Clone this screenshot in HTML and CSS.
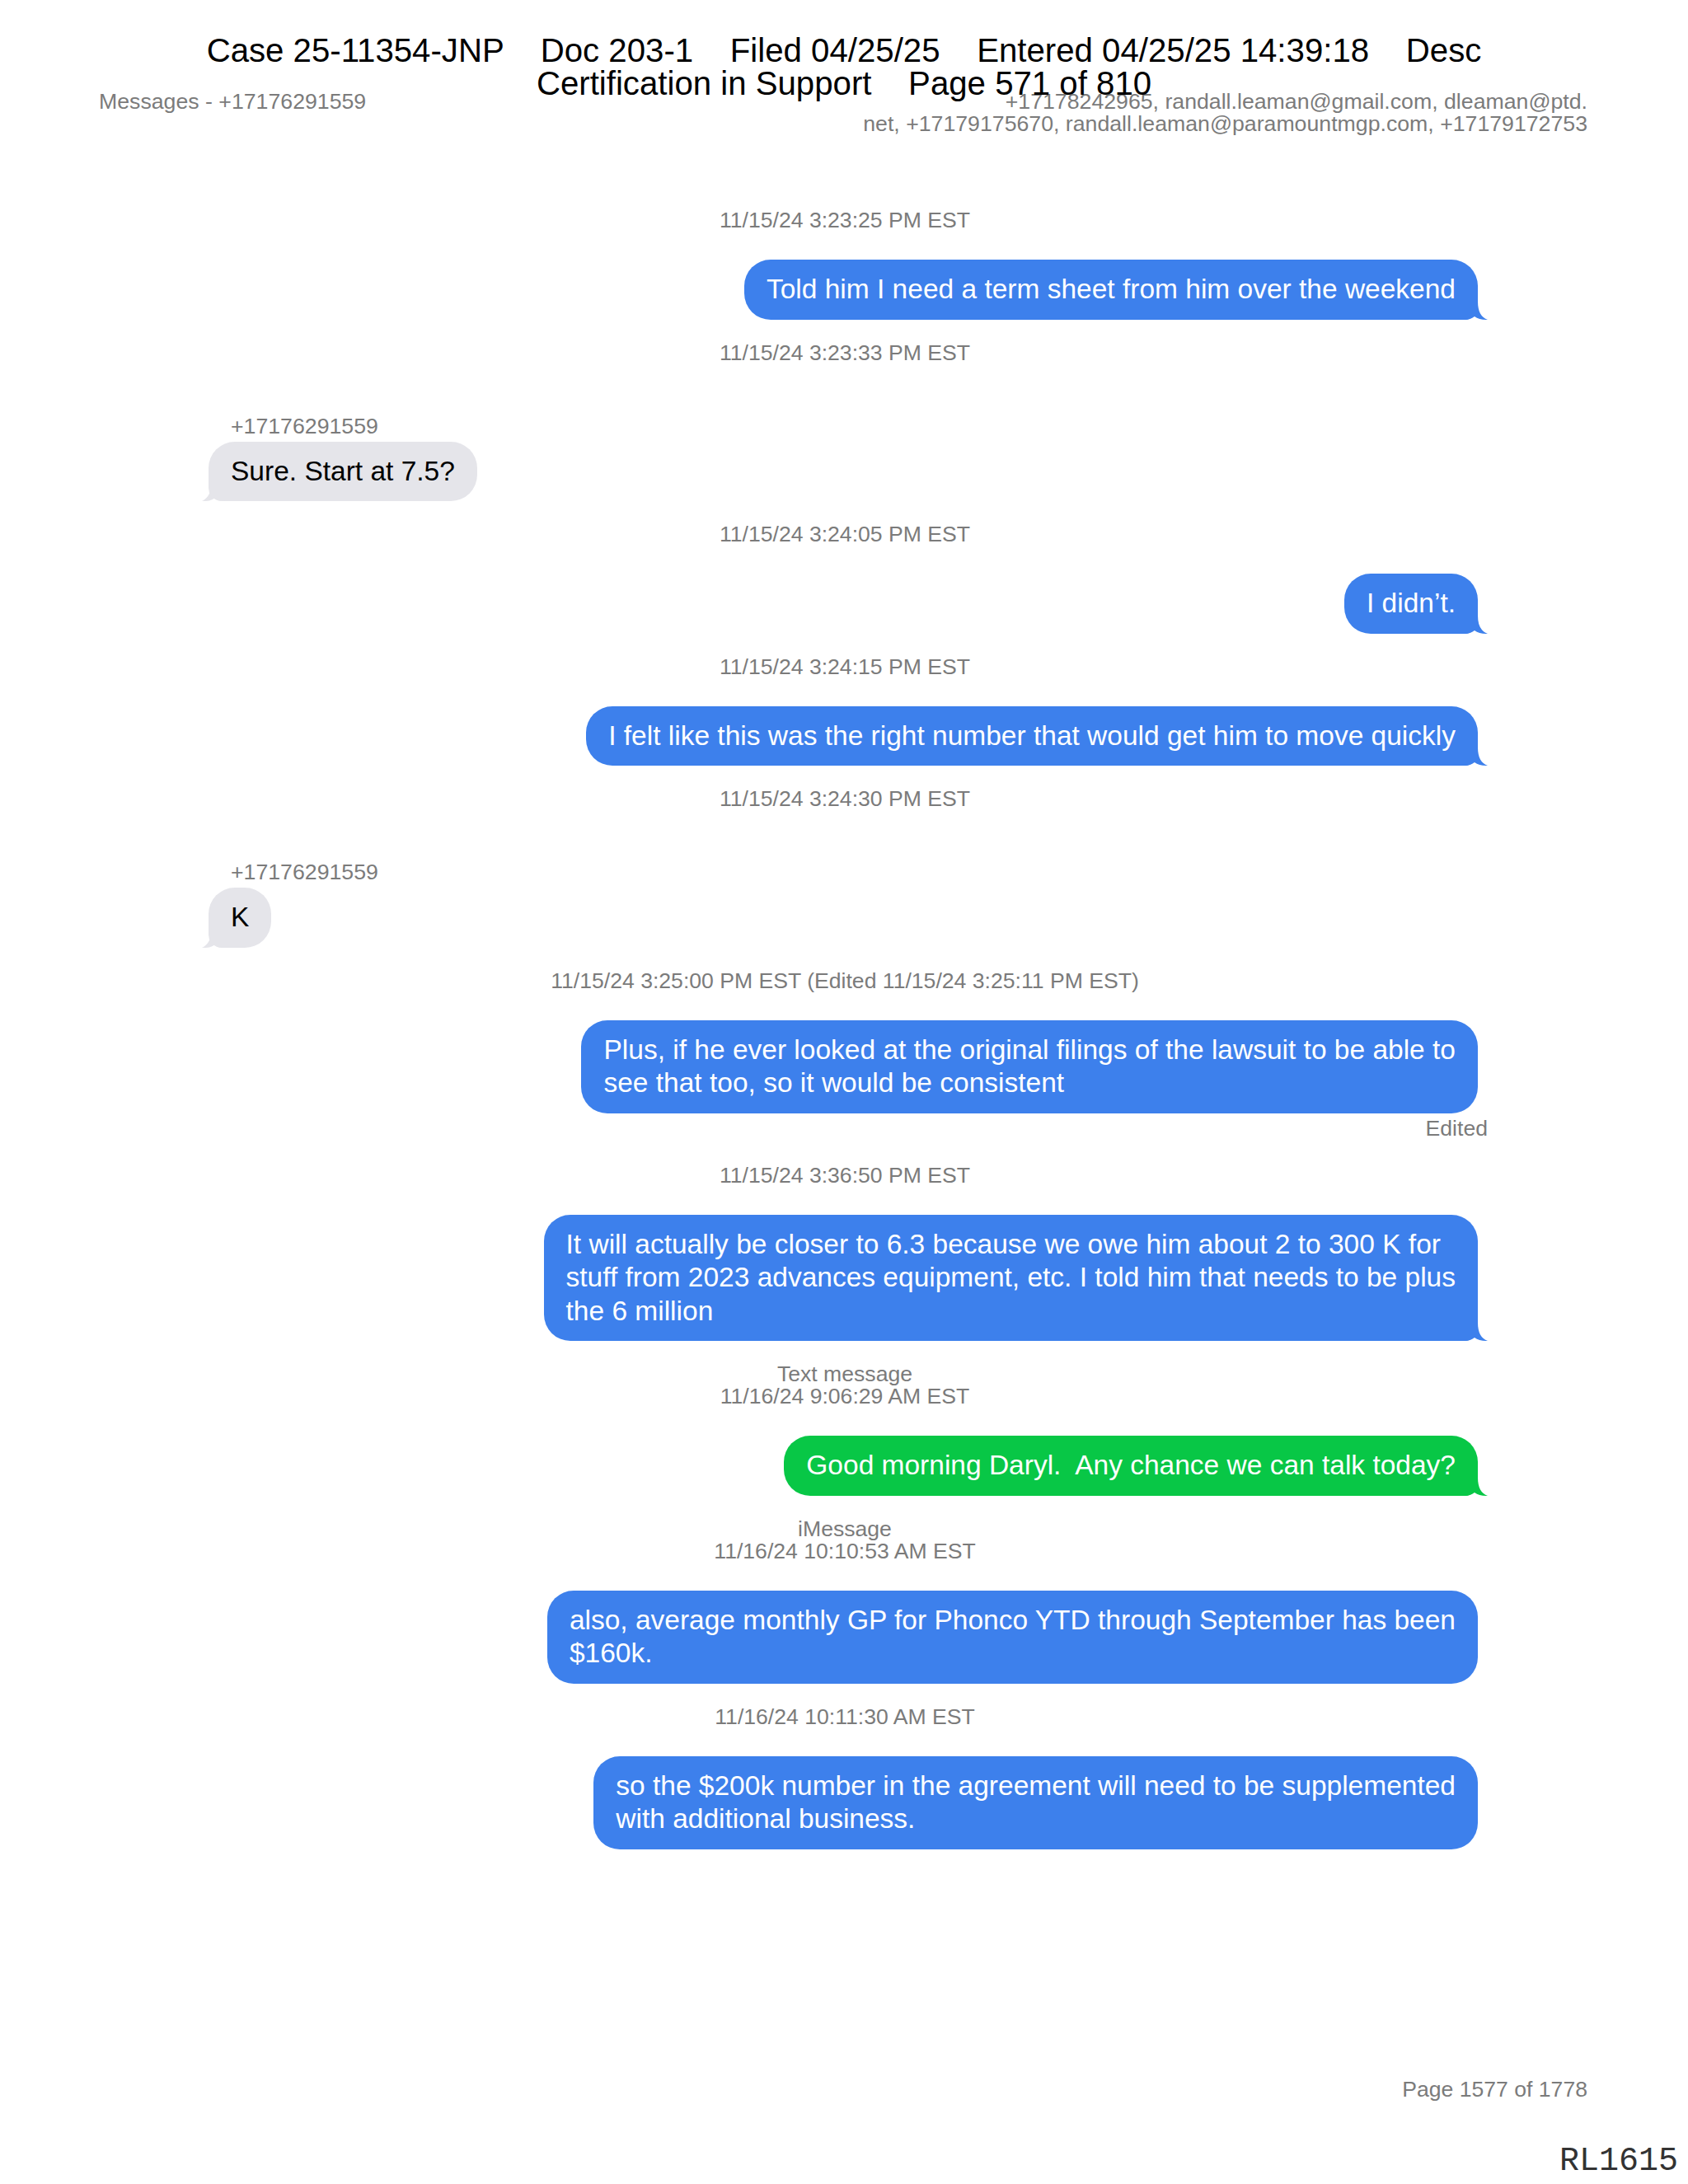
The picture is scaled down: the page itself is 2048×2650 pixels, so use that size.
FILE: index.html
```html
<!DOCTYPE html>
<html lang="en">
<head>
<meta charset="utf-8">
<title>Messages - +17176291559</title>
<link rel="stylesheet" href="styles.css">
</head>
<body>
<div class="stamp">Case 25-11354-JNP    Doc 203-1    Filed 04/25/25    Entered 04/25/25 14:39:18    Desc
Certification in Support    Page 571 of 810</div>
<div class="page">
  <header class="topbar">
    <div class="title">Messages - +17176291559</div>
    <div class="parts">+17178242965, randall.leaman@gmail.com, dleaman@ptd.<br>net, +17179175670, randall.leaman@paramountmgp.com, +17179172753</div>
  </header>

  <main class="thread">
    <section class="msg sent">
      <div class="meta">11/15/24 3:23:25 PM EST</div>
      <div class="row"><div class="bubble blue">Told him I need a term sheet from him over the weekend<svg class="tail" viewBox="0 0 30 36"><path d="M0 0H16V14C16 26 20 33 28 36C22 36.5 16 35 12 32C8 35 4 36 0 36Z"/></svg></div></div>
    </section>

    <section class="msg recv">
      <div class="meta">11/15/24 3:23:33 PM EST</div>
      <div class="sender">+17176291559</div>
      <div class="row"><div class="bubble gray">Sure. Start at 7.5?<svg class="tail" viewBox="0 0 30 36"><path d="M0 0H16V10C16 24 20 32 28 36C22 36.5 16 35 12 32C8 35 4 36 0 36Z"/></svg></div></div>
    </section>

    <section class="msg sent">
      <div class="meta">11/15/24 3:24:05 PM EST</div>
      <div class="row"><div class="bubble blue">I didn’t.<svg class="tail" viewBox="0 0 30 36"><path d="M0 0H16V14C16 26 20 33 28 36C22 36.5 16 35 12 32C8 35 4 36 0 36Z"/></svg></div></div>
    </section>

    <section class="msg sent">
      <div class="meta">11/15/24 3:24:15 PM EST</div>
      <div class="row"><div class="bubble blue">I felt like this was the right number that would get him to move quickly<svg class="tail" viewBox="0 0 30 36"><path d="M0 0H16V14C16 26 20 33 28 36C22 36.5 16 35 12 32C8 35 4 36 0 36Z"/></svg></div></div>
    </section>

    <section class="msg recv">
      <div class="meta">11/15/24 3:24:30 PM EST</div>
      <div class="sender">+17176291559</div>
      <div class="row"><div class="bubble gray">K<svg class="tail" viewBox="0 0 30 36"><path d="M0 0H16V10C16 24 20 32 28 36C22 36.5 16 35 12 32C8 35 4 36 0 36Z"/></svg></div></div>
    </section>

    <section class="msg sent">
      <div class="meta">11/15/24 3:25:00 PM EST (Edited 11/15/24 3:25:11 PM EST)</div>
      <div class="row"><div class="bubble blue square">Plus, if he ever looked at the original filings of the lawsuit to be able to<br>see that too, so it would be consistent</div></div>
      <div class="edited">Edited</div>
    </section>

    <section class="msg sent">
      <div class="meta">11/15/24 3:36:50 PM EST</div>
      <div class="row"><div class="bubble blue">It will actually be closer to 6.3 because we owe him about 2 to 300 K for<br>stuff from 2023 advances equipment, etc. I told him that needs to be plus<br>the 6 million<svg class="tail" viewBox="0 0 30 36"><path d="M0 0H16V14C16 26 20 33 28 36C22 36.5 16 35 12 32C8 35 4 36 0 36Z"/></svg></div></div>
    </section>

    <section class="msg sent">
      <div class="meta">Text message<br>11/16/24 9:06:29 AM EST</div>
      <div class="row"><div class="bubble green">Good morning Daryl.&nbsp; Any chance we can talk today?<svg class="tail" viewBox="0 0 30 36"><path d="M0 0H16V14C16 26 20 33 28 36C22 36.5 16 35 12 32C8 35 4 36 0 36Z"/></svg></div></div>
    </section>

    <section class="msg sent">
      <div class="meta">iMessage<br>11/16/24 10:10:53 AM EST</div>
      <div class="row"><div class="bubble blue square">also, average monthly GP for Phonco YTD through September has been<br>$160k.</div></div>
    </section>

    <section class="msg sent">
      <div class="meta">11/16/24 10:11:30 AM EST</div>
      <div class="row"><div class="bubble blue square">so the $200k number in the agreement will need to be supplemented<br>with additional business.</div></div>
    </section>
  </main>

  <footer class="footer">
    <div class="pagenum">Page 1577 of 1778</div>
    <div class="bates">RL1615</div>
  </footer>
</div>
</body>
</html>
```

FILE: styles.css
```css
html, body {
  margin: 0;
  padding: 0;
  background: #ffffff;
}

body {
  font-family: "Liberation Sans", Arial, Helvetica, sans-serif;
  color: #000;
}

.stamp {
  position: absolute;
  top: 42px;
  left: 0;
  right: 0;
  text-align: center;
  font-size: 40.2px;
  line-height: 40px;
  white-space: pre;
  color: #000;
  z-index: 5;
}

.page {
  min-height: 2650px;
  box-sizing: border-box;
  display: flex;
  flex-direction: column;
  padding-bottom: 7px;
}

.topbar {
  display: flex;
  justify-content: space-between;
  align-items: flex-start;
  margin-top: 110px;
  padding: 0 122px 0 120px;
  font-size: 26.7px;
  line-height: 27px;
  color: #7b7b7b;
}

.parts {
  text-align: right;
}

.thread {
  display: flex;
  flex-direction: column;
  margin-top: 63px;
  padding: 0 243px 0 245px;
}

.msg {
  display: flex;
  flex-direction: column;
  margin-top: 27px;
}

.meta {
  text-align: center;
  font-size: 26.6px;
  line-height: 27px;
  color: #7b7b7b;
  margin-bottom: 34px;
}

.sender {
  margin: 28px 0 5px 35px;
  font-size: 26.7px;
  line-height: 27px;
  color: #7b7b7b;
}

.row {
  display: flex;
}

.sent .row {
  justify-content: flex-end;
  padding-right: 12px;
}

.recv .row {
  justify-content: flex-start;
  padding-left: 8px;
}

.bubble {
  position: relative;
  font-size: 33.5px;
  line-height: 40.5px;
  padding: 16px 27px;
  border-radius: 32px;
  white-space: nowrap;
}

.blue {
  background: #3d80ec;
  color: #fff;
  border-bottom-right-radius: 16px;
}

.green {
  background: #08c746;
  color: #fff;
  border-bottom-right-radius: 16px;
}

.gray {
  background: #e5e5ea;
  color: #000;
  border-bottom-left-radius: 16px;
}

.square {
  border-bottom-right-radius: 32px;
}

.tail {
  position: absolute;
  bottom: 0;
  right: -14px;
  width: 30px;
  height: 36px;
  overflow: visible;
}

.blue .tail { fill: #3d80ec; }
.green .tail { fill: #08c746; }
.gray .tail {
  fill: #e5e5ea;
  right: auto;
  left: -10px;
  transform: scaleX(-1);
}

.edited {
  text-align: right;
  font-size: 26.6px;
  line-height: 27px;
  color: #7b7b7b;
  margin: 5px 0 3px;
}

.footer {
  margin-top: auto;
  display: flex;
  flex-direction: column;
}

.pagenum {
  text-align: right;
  padding-right: 122px;
  font-size: 26.6px;
  line-height: 27px;
  color: #7b7b7b;
}

.bates {
  text-align: right;
  padding-right: 12px;
  margin-top: 54.5px;
  font-family: "Liberation Mono", "Courier New", monospace;
  font-size: 40px;
  line-height: 40px;
  color: #333;
}
```
